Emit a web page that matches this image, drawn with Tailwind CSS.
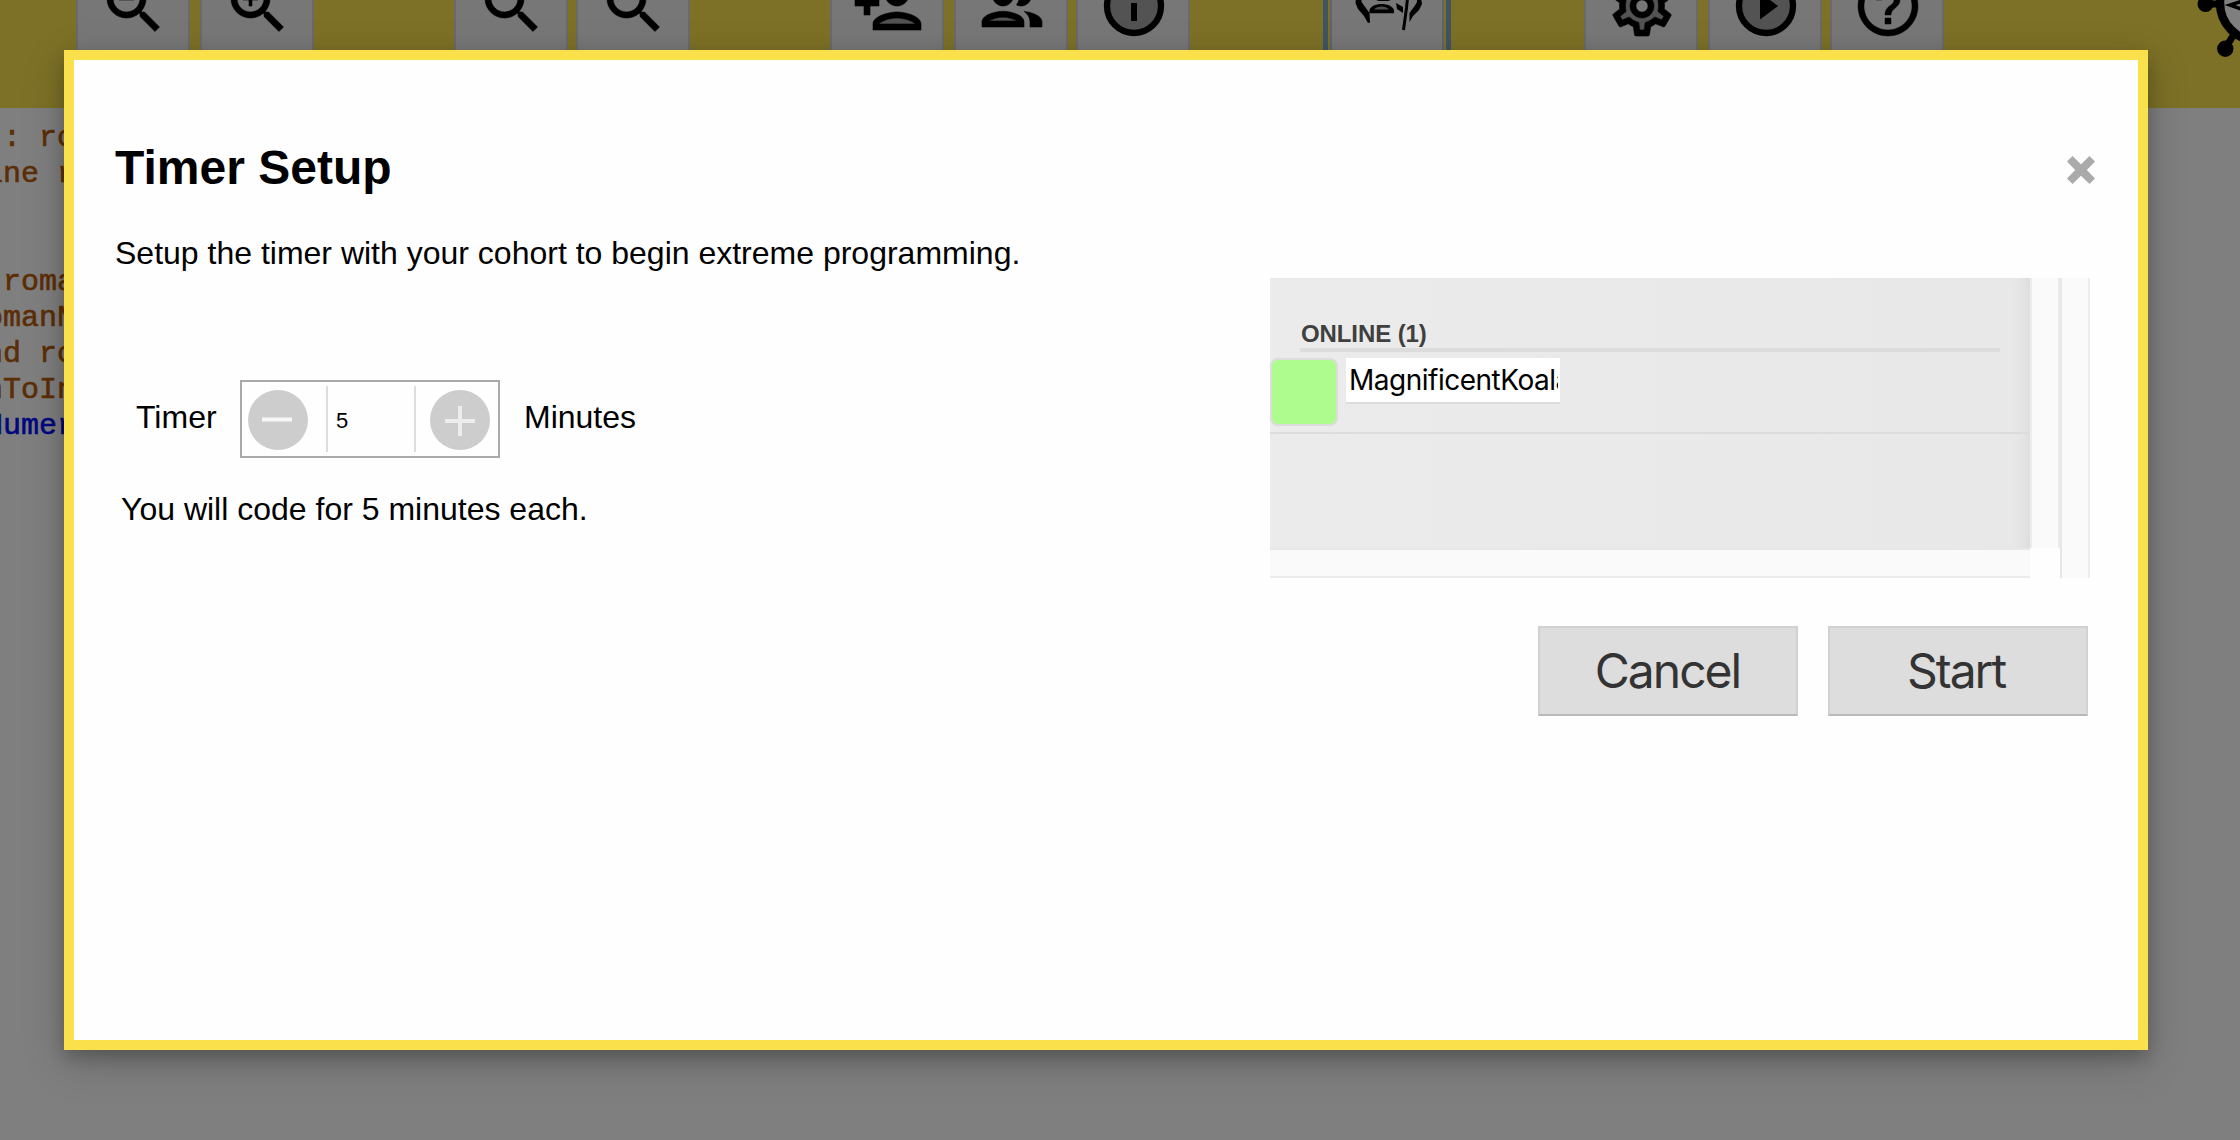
<!DOCTYPE html>
<html lang="en">
<head>
<meta charset="utf-8">
<title>Timer Setup</title>
<script src="https://cdn.jsdelivr.net/npm/@tailwindcss/browser@4"></script>
</head>
<body class="relative h-[1140px] w-[2240px] overflow-hidden bg-white font-['Liberation_Sans',Arial,sans-serif] text-black">

<!-- Toolbar, scrolled partly out of view -->
<header class="flex h-[108px] items-start overflow-hidden bg-[#fbe34e] pl-[76px]">
  <div class="flex gap-[10px]">
    <button class="flex h-[74px] w-[114px] items-start border-x-2 border-[#d4d4d4] bg-[#eeeeee]">
      <svg class="-mt-[30px] ml-[20px] size-[72px]" viewBox="0 0 24 24" stroke="#000" stroke-width=".2"><path d="M15.5 14h-.79l-.28-.27C15.41 12.59 16 11.11 16 9.5 16 5.91 13.09 3 9.5 3S3 5.91 3 9.5 5.91 16 9.5 16c1.61 0 3.09-.59 4.23-1.57l.27.28v.79l5 4.99L20.49 19l-4.99-5zm-6 0C7.01 14 5 11.99 5 9.500S7.010 5 9.500 5 14 7.010 14 9.500 11.990 14 9.500 14zM7 9h5v1H7z"/></svg>
    </button>
    <button class="flex h-[74px] w-[114px] items-start border-x-2 border-[#d4d4d4] bg-[#eeeeee]">
      <svg class="-mt-[30px] ml-[20px] size-[72px]" viewBox="0 0 24 24" stroke="#000" stroke-width=".2"><path d="M15.5 14h-.79l-.28-.27C15.41 12.59 16 11.11 16 9.5 16 5.91 13.09 3 9.5 3S3 5.91 3 9.5 5.91 16 9.5 16c1.61 0 3.09-.59 4.23-1.57l.27.28v.79l5 4.99L20.49 19l-4.99-5zm-6 0C7.01 14 5 11.99 5 9.500S7.010 5 9.500 5 14 7.010 14 9.500 11.990 14 9.500 14zM12 10h-2v2H9v-2H7V9h2V7h1v2h2v1z"/></svg>
    </button>
  </div>
  <div class="ml-[140px] flex gap-2">
    <button class="flex h-[74px] w-[114px] items-start border-x-2 border-[#d4d4d4] bg-[#eeeeee]">
      <svg class="-mt-[30px] ml-[20px] size-[72px]" viewBox="0 0 24 24" stroke="#000" stroke-width=".2"><path d="M15.5 14h-.79l-.28-.27C15.41 12.59 16 11.11 16 9.5 16 5.91 13.09 3 9.5 3S3 5.91 3 9.5 5.91 16 9.5 16c1.61 0 3.09-.59 4.23-1.57l.27.28v.79l5 4.99L20.49 19l-4.99-5zm-6 0C7.01 14 5 11.99 5 9.500S7.010 5 9.500 5 14 7.010 14 9.500 11.990 14 9.500 14z"/></svg>
    </button>
    <button class="flex h-[74px] w-[114px] items-start border-x-2 border-[#d4d4d4] bg-[#eeeeee]">
      <svg class="-mt-[30px] ml-[20px] size-[72px]" viewBox="0 0 24 24" stroke="#000" stroke-width=".2"><path d="M15.5 14h-.79l-.28-.27C15.41 12.59 16 11.11 16 9.5 16 5.91 13.09 3 9.5 3S3 5.91 3 9.5 5.91 16 9.5 16c1.61 0 3.09-.59 4.23-1.57l.27.28v.79l5 4.99L20.49 19l-4.99-5zm-6 0C7.01 14 5 11.99 5 9.500S7.010 5 9.500 5 14 7.010 14 9.500 11.990 14 9.500 14z"/></svg>
    </button>
  </div>
  <div class="ml-[140px] flex">
    <button class="flex h-[74px] w-[114px] items-start border-x-2 border-[#d4d4d4] bg-[#eeeeee]">
      <svg class="-mt-[30px] ml-[20px] size-[72px]" viewBox="0 0 24 24"><path opacity=".3" d="M15 16c-2.690 0-5.770 1.280-6 2h12c-.2-.71-3.300-2-6-2z"/><path stroke="#000" stroke-width=".2" d="M15 14c-2.670 0-8 1.340-8 4v2h16v-2c0-2.660-5.330-4-8-4zm-6 4c.22-.72 3.310-2 6-2 2.700 0 5.800 1.290 6 2H9zm6-6c2.210 0 4-1.790 4-4s-1.790-4-4-4-4 1.790-4 4 1.790 4 4 4zm0-6c1.100 0 2 .9 2 2s-.9 2-2 2-2-.9-2-2 .9-2 2-2zM6 15v-3h3v-2H6V7H4v3H1v2h3v3z"/></svg>
    </button>
    <button class="ml-[10px] flex h-[74px] w-[114px] items-start border-x-2 border-[#d4d4d4] bg-[#eeeeee]">
      <svg class="-mt-[30px] ml-[20px] size-[72px]" viewBox="0 0 24 24"><path opacity=".3" d="M4.340 17h9.320c-.84-.58-2.870-1.250-4.660-1.250s-3.820.67-4.660 1.250z"/><path stroke="#000" stroke-width=".2" d="M9 12c1.930 0 3.500-1.570 3.500-3.500S10.930 5 9 5 5.500 6.570 5.500 8.500 7.070 12 9 12zm0-5c.83 0 1.500.67 1.500 1.500S9.830 10 9 10s-1.500-.67-1.500-1.500S8.170 7 9 7zm0 6.750c-2.340 0-7 1.170-7 3.500V19h14v-1.750c0-2.330-4.660-3.500-7-3.500zM4.340 17c.84-.58 2.870-1.250 4.660-1.250s3.820.67 4.660 1.250H4.340zm11.700-3.190c1.160.84 1.960 1.960 1.960 3.440V19h4v-1.750c0-2.020-3.500-3.170-5.960-3.440zM15 12c1.930 0 3.500-1.570 3.500-3.500S16.930 5 15 5c-.54 0-1.040.13-1.500.35.63.89 1 1.980 1 3.150s-.37 2.260-1 3.150c.46.22.96.35 1.500.35z"/></svg>
    </button>
    <button class="ml-2 flex h-[74px] w-[114px] items-start border-x-2 border-[#d4d4d4] bg-[#eeeeee]">
      <svg class="-mt-[30px] ml-[20px] size-[72px]" viewBox="0 0 24 24"><circle cx="12" cy="12" r="9" fill="#a7a7a7" stroke="#000" stroke-width="2.100"/><path d="M11 11h2v6h-2zM11 7h2v2h-2z"/></svg>
    </button>
  </div>
  <button class="ml-[140px] flex h-[74px] w-[114px] items-start border-x-2 border-[#bcc8d8] bg-[#eeeeee] outline-[5px] outline-offset-2 outline-[#7eaac8]">
    <svg class="ml-[20px] h-[36px] w-[72px]" viewBox="22 0 72 36">
      <path d="M26 -2L25.500 3 28 9 34 16 38 23 40 22.500 39.500 13 34 5.500 31.500 2V-2zM91 -2L92 4 89 10 83 16 79.500 22 79.500 13 85 5.500 87 2V-2z"/>
      <path d="M39.500 13.300V10C42 2 61 2 64 10v3.300z"/><path d="M44 9.500C47 5.500 56 5.500 59 9.500z" fill="#999"/>
      <path d="M46 0l3 1h9l3-1zM66 3l7 4v6l-6-4z"/>
      <path d="M77.500-2L76.500 8 73.500 30" fill="none" stroke="#000" stroke-width="3"/>
    </svg>
  </button>
  <div class="ml-[140px] flex">
    <button class="flex h-[74px] w-[114px] items-start border-x-2 border-[#d4d4d4] bg-[#eeeeee]">
      <svg class="-mt-[30px] ml-[20px] size-[72px]" viewBox="0 0 24 24"><path opacity=".3" fill-rule="evenodd" d="M19.280 8.600l-.7-1.210-1.270.51-1.060.43-.91-.7c-.39-.3-.8-.54-1.230-.71l-1.060-.43-.16-1.130L12.700 4h-1.400l-.19 1.350-.16 1.130-1.060.44c-.41.17-.82.41-1.250.73l-.9.68-1.050-.42-1.270-.52-.7 1.210 1.080.84.89.7-.14 1.130c-.03.3-.05.53-.05.730s.02.43.05.73l.14 1.130-.89.7-1.080.84.7 1.210 1.270-.51 1.060-.43.91.7c.39.3.8.54 1.230.71l1.060.43.16 1.130.19 1.360h1.390l.19-1.350.16-1.130 1.060-.43c.41-.17.82-.41 1.250-.73l.9-.68 1.040.42 1.270.51.7-1.210-1.080-.84-.89-.7.14-1.130c.04-.31.05-.52.05-.73 0-.21-.02-.43-.05-.73l-.14-1.130.89-.7 1.100-.84zM12 16c-2.210 0-4-1.790-4-4s1.790-4 4-4 4 1.790 4 4-1.790 4-4 4z"/><path stroke="#000" stroke-width=".2" d="M19.430 12.980c.04-.32.07-.64.07-.98 0-.34-.03-.66-.07-.98l2.110-1.650c.19-.15.24-.42.12-.64l-2-3.460c-.09-.16-.26-.25-.44-.25-.06 0-.12.01-.17.03l-2.490 1c-.52-.4-1.080-.73-1.690-.98l-.38-2.650C14.460 2.180 14.250 2 14 2h-4c-.25 0-.46.18-.49.42l-.38 2.650c-.61.25-1.170.59-1.690.98l-2.490-1c-.06-.02-.12-.03-.18-.03-.17 0-.34.09-.43.25l-2 3.460c-.13.22-.07.49.12.64l2.110 1.650c-.04.32-.07.65-.07.98s.03.66.07.98l-2.110 1.650c-.19.15-.24.42-.12.64l2 3.460c.09.16.26.25.44.25.06 0 .12-.01.17-.03l2.490-1c.52.4 1.080.73 1.690.98l.38 2.650c.03.24.24.42.49.42h4c.25 0 .46-.18.49-.42l.38-2.650c.61-.25 1.170-.59 1.690-.98l2.490 1c.06.02.12.03.18.03.17 0 .34-.09.43-.25l2-3.460c.12-.22.07-.49-.12-.64l-2.110-1.650zm-1.980-1.710c.04.31.05.52.05.73 0 .21-.02.43-.05.73l-.14 1.130.89.7 1.080.84-.7 1.210-1.270-.51-1.040-.42-.9.68c-.43.32-.84.56-1.250.73l-1.060.43-.16 1.130-.2 1.350h-1.400l-.19-1.350-.16-1.130-1.060-.43c-.43-.18-.83-.41-1.230-.71l-.91-.7-1.060.43-1.270.51-.7-1.210 1.080-.84.89-.7-.14-1.130c-.03-.31-.05-.54-.05-.74s.02-.43.05-.73l.14-1.130-.89-.7-1.080-.84.7-1.210 1.270.51 1.040.42.9-.68c.43-.32.84-.56 1.250-.73l1.060-.43.16-1.130.2-1.350h1.390l.19 1.350.16 1.130 1.060.43c.43.18.83.41 1.230.71l.91.7 1.060-.43 1.270-.51.7 1.210-1.070.85-.89.7.14 1.130zM12 8c-2.210 0-4 1.790-4 4s1.790 4 4 4 4-1.790 4-4-1.790-4-4-4zm0 6c-1.100 0-2-.9-2-2s.9-2 2-2 2 .9 2 2-.9 2-2 2z"/></svg>
    </button>
    <button class="ml-[10px] flex h-[74px] w-[114px] items-start border-x-2 border-[#d4d4d4] bg-[#eeeeee]">
      <svg class="-mt-[30px] ml-[20px] size-[72px]" viewBox="0 0 24 24"><circle cx="12" cy="12" r="9" fill="#a7a7a7" stroke="#000" stroke-width="2.100"/><path d="M10 16.500l6-4.500-6-4.500z"/></svg>
    </button>
    <button class="ml-2 flex h-[74px] w-[114px] items-start border-x-2 border-[#d4d4d4] bg-[#eeeeee]">
      <svg class="-mt-[30px] ml-[20px] size-[72px]" viewBox="0 0 24 24" stroke="#000" stroke-width=".15"><path d="M11 18h2v-2h-2v2zm1-16C6.480 2 2 6.480 2 12s4.480 10 10 10 10-4.480 10-10S17.520 2 12 2zm0 18c-4.410 0-8-3.590-8-8s3.590-8 8-8 8 3.590 8 8-3.590 8-8 8zm0-14c-2.210 0-4 1.790-4 4h2c0-1.100.9-2 2-2s2 .9 2 2c0 2-3 1.750-3 5h2c0-2.250 3-2.500 3-5 0-2.210-1.790-4-4-4z"/></svg>
    </button>
  </div>
  <!-- Mascot logo, cut off by the window edge -->
  <svg class="ml-auto h-[70px] w-[50px] shrink-0" viewBox="0 0 50 70">
    <circle cx="68" cy="3" r="38" fill="#fff" stroke="#000" stroke-width="8.500"/>
    <path d="M15.500 4H28M35 49L44 34" stroke="#000" stroke-width="7"/>
    <circle cx="15.500" cy="4" r="8"/><circle cx="35.300" cy="48.700" r="8.200"/>
    <path d="M51 1.500L40 5 51 9" fill="none" stroke="#000" stroke-width="3.500"/>
  </svg>
</header>

<!-- Code editor behind the dialog -->
<pre class="-ml-[15px] w-[79px] overflow-hidden pt-3 font-['Liberation_Mono','Courier_New',monospace] text-[30px] leading-[36px] text-[#b85c0c] [-webkit-text-stroke:0.6px]"> : rom
ine r


 roma
omanN
nd ro
nToIn
<span class="text-[#0011ff]">Numer</span></pre>

<!-- Overlay and dialog -->
<div class="absolute inset-0 flex items-start bg-black/50 pt-[50px] pl-16">
  <section class="h-[1000px] w-[2084px] border-10 border-[#fae04b] bg-[#fefefe] pt-20 pr-12 pl-[41px] shadow-[0_8px_16px_0_rgba(0,0,0,0.2),0_12px_40px_0_rgba(0,0,0,0.19)]">
    <div class="flex h-14 items-center justify-between">
      <h1 class="text-5xl/[56px] font-bold">Timer Setup</h1>
      <svg class="mt-1 -mr-[5px] size-[28px]" viewBox="0 0 28 28" fill="#aaaaaa"><path d="M5.500 0L14 8.200 22.500 0 28 5.500 19.800 14 28 22.500 22.500 28 14 19.800 5.500 28 0 22.500 8.200 14 0 5.500z"/></svg>
    </div>
    <p class="mt-[39px] text-[32px]/[36px]">Setup the timer with your cohort to begin extreme programming.</p>

    <div class="mt-[7px] flex justify-between">
      <div class="pt-[102px]">
        <div class="flex h-[78px] items-center pl-[21px] text-[32px]/[36px]">
          <span class="w-[104px] pb-[4px]">Timer</span>
          <div class="flex h-[78px] w-[260px] items-center border-2 border-[#a9a9a9] px-[6px]">
            <svg class="mt-0.5 size-[60px]" viewBox="0 0 60 60"><circle cx="30" cy="30" r="30" fill="#cdcdcd"/><path d="M14 29.500h30" stroke="#f6f6f6" stroke-width="4"/></svg>
            <div class="ml-[18px] flex h-[66px] w-[90px] items-center border-x-2 border-[#dddddd] pt-[3px] pl-[8px] text-[22px]">5</div>
            <svg class="mt-0.5 ml-[14px] size-[60px]" viewBox="0 0 60 60"><circle cx="30" cy="30" r="30" fill="#cdcdcd"/><path d="M15 31h30M30 16v30" stroke="#ededed" stroke-width="4"/></svg>
          </div>
          <span class="ml-6 pb-[4px]">Minutes</span>
        </div>
        <p class="mt-[33px] pl-[6px] text-[32px]/[36px]">You will code for 5 minutes each.</p>
      </div>

      <div>
        <!-- Participants panel with its scrollbar tracks -->
        <div class="flex h-[300px] w-[820px]">
          <div class="w-[760px]">
            <div class="h-[270px] bg-linear-to-r from-[#ebebeb] to-[#e8e8e8] shadow-[inset_-14px_0_18px_-12px_rgba(0,0,0,0.07)]">
              <div class="ml-[30px] h-[74px] w-[700px] border-b-4 border-[#dcdcdc] pt-[42px] pl-px text-[24px]/[28px] font-bold tracking-[-0.1px] text-[#3f3f3f]">ONLINE (1)</div>
              <div class="flex h-[82px] items-start gap-2 border-b-2 border-[#dcdcdc] pt-[6px]">
                <div class="size-[68px] rounded-lg border-2 border-[#dcdcdc] bg-[#aefb8e]"></div>
                <div class="h-[46px] w-[214px] border-b-2 border-[#dcdcdc] bg-white pr-[2px] pl-[3px]">
                  <div class="overflow-hidden font-['Inter',sans-serif] text-[28px]/[44px] tracking-[-0.5px] whitespace-nowrap">MagnificentKoala</div>
                </div>
              </div>
            </div>
            <div class="h-[30px] border-t-2 border-b-2 border-t-[#e7e7e7] border-b-[#ebebeb] bg-[#fafafa]"></div>
          </div>
          <div class="h-[270px] w-[30px] border-x-2 border-l-[#ededed] border-r-[#ebebeb] bg-[#fafafa]"></div>
          <div class="w-[30px] border-x-2 border-l-[#e7e7e7] border-r-[#ededed] bg-[#fafafa]"></div>
        </div>
        <div class="mt-12 mr-[2px] flex justify-end gap-[30px] font-['Inter',sans-serif] text-5xl tracking-[-2px] text-[#333333]">
          <button class="h-[90px] w-[260px] border-2 border-[#d1d1d1] border-b-[#b8b8b8] bg-[#dddddd] pr-px">Cancel</button>
          <button class="h-[90px] w-[260px] border-2 border-[#d1d1d1] border-b-[#b8b8b8] bg-[#dddddd] pr-1">Start</button>
        </div>
      </div>
    </div>
  </section>
</div>
</body>
</html>
